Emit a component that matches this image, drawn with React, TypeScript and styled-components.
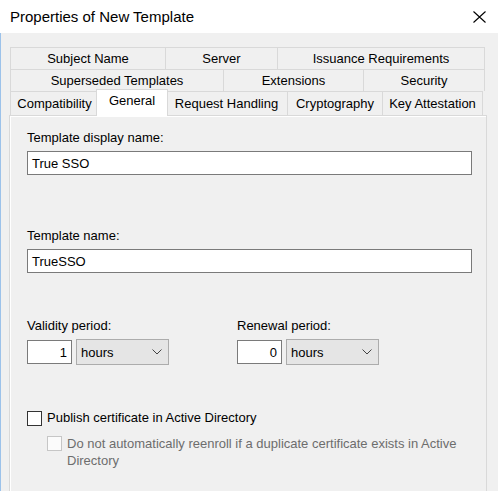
import styled, { createGlobalStyle } from "styled-components";

type TabInfo = { label: string; width: number; selected?: boolean };

const tabRows: { height: number; tabs: TabInfo[] }[] = [
  {
    height: 22,
    tabs: [
      { label: "Subject Name", width: 156 },
      { label: "Server", width: 113 },
      { label: "Issuance Requirements", width: 208 },
    ],
  },
  {
    height: 22,
    tabs: [
      { label: "Superseded Templates", width: 214 },
      { label: "Extensions", width: 141 },
      { label: "Security", width: 122 },
    ],
  },
  {
    height: 24,
    tabs: [
      { label: "Compatibility", width: 89 },
      { label: "General", width: 68, selected: true },
      { label: "Request Handling", width: 123 },
      { label: "Cryptography", width: 96 },
      { label: "Key Attestation", width: 101 },
    ],
  },
];

const CloseIcon = (): JSX.Element => (
  <svg width="13" height="12" viewBox="0 0 13 12">
    <path d="M0.5 0.5 L12.5 11.5 M12.5 0.5 L0.5 11.5" stroke="#000" strokeWidth="1.1" fill="none" />
  </svg>
);

const Chevron = (): JSX.Element => (
  <svg width="10" height="6" viewBox="0 0 10 6">
    <path d="M0.5 0.5 L5 5 L9.5 0.5" stroke="#444" strokeWidth="1" fill="none" />
  </svg>
);

const PeriodControl = ({ label, value }: { label: string; value: string }): JSX.Element => (
  <div>
    <Label>{label}</Label>
    <ControlRow>
      <NumberBox>{value}</NumberBox>
      <Dropdown>
        <span>hours</span>
        <Chevron />
      </Dropdown>
    </ControlRow>
  </div>
);

const App = (): JSX.Element => {
  return (
    <Window>
      <GlobalStyle />
      <TitleBar>
        <Title>Properties of New Template</Title>
        <CloseIcon />
      </TitleBar>
      <Body>
        <TabStrip>
          {tabRows.map((row, i) => (
            <TabRow key={i} $height={row.height}>
              {row.tabs.map((tab) => (
                <Tab key={tab.label} $width={tab.width} $selected={tab.selected}>
                  {tab.label}
                </Tab>
              ))}
            </TabRow>
          ))}
        </TabStrip>
        <Panel>
          <FieldGroup $top={0}>
            <Label>Template display name:</Label>
            <TextBox>True SSO</TextBox>
          </FieldGroup>
          <FieldGroup $top={53}>
            <Label>Template name:</Label>
            <TextBox>TrueSSO</TextBox>
          </FieldGroup>
          <PeriodGrid>
            <PeriodControl label="Validity period:" value="1" />
            <PeriodControl label="Renewal period:" value="0" />
          </PeriodGrid>
          <CheckRow>
            <CheckBox />
            <span>Publish certificate in Active Directory</span>
          </CheckRow>
          <SubCheckRow>
            <CheckBox $disabled />
            <DisabledText>
              Do not automatically reenroll if a duplicate certificate exists in Active Directory
            </DisabledText>
          </SubCheckRow>
        </Panel>
      </Body>
    </Window>
  );
};

const GlobalStyle = createGlobalStyle`
  html, body {
    margin: 0;
    padding: 0;
    background: #f0f0f0;
  }
  body {
    font-family: "Liberation Sans", Arial, sans-serif;
    font-size: 13px;
    color: #000;
  }
  * {
    box-sizing: border-box;
  }
`;

const Window = styled.div`
  width: 498px;
  height: 491px;
  display: flex;
  flex-direction: column;
  overflow: hidden;
  background: #f0f0f0;
`;
const TitleBar = styled.div`
  height: 33px;
  flex: none;
  background: #fff;
  display: flex;
  align-items: center;
  justify-content: space-between;
  padding: 0 12px 0 10px;
`;
const Title = styled.div`
  font-size: 15px;
  color: #000;
`;
const Body = styled.div`
  flex: 1;
  display: flex;
  flex-direction: column;
  border-left: 1px solid #9cc2ea;
  padding: 14px 0 0 9px;
`;
const TabStrip = styled.div`
  width: 475px;
  display: flex;
  flex-direction: column;
`;
const TabRow = styled.div<{ $height: number }>`
  display: flex;
  align-items: flex-end;
  height: ${(p) => p.$height}px;
`;
const Tab = styled.div<{ $width: number; $selected?: boolean }>`
  width: ${(p) => p.$width + (p.$selected ? 4 : 0)}px;
  height: ${(p) => (p.$selected ? "calc(100% + 3px)" : "100%")};
  margin: ${(p) => (p.$selected ? "-2px -3px -1px -2px" : "0 -1px 0 0")};
  padding-top: ${(p) => (p.$selected ? "2px" : "0")};
  position: ${(p) => (p.$selected ? "relative" : "static")};
  z-index: ${(p) => (p.$selected ? 1 : "auto")};
  background: ${(p) => (p.$selected ? "#fff" : "#f0f0f0")};
  border: 1px solid #d9d9d9;
  border-bottom: none;
  display: flex;
  align-items: ${(p) => (p.$selected ? "flex-start" : "center")};
  justify-content: center;
  line-height: ${(p) => (p.$selected ? "18px" : "16px")};
  white-space: nowrap;
`;
const Panel = styled.div`
  flex: 1;
  width: 478px;
  margin-left: -1px;
  border: 1px solid #d9d9d9;
  border-bottom: none;
  box-shadow: inset 1px 1px 0 #fff;
  padding: 14px 0 0 17px;
  display: flex;
  flex-direction: column;
`;
const FieldGroup = styled.div<{ $top: number }>`
  margin-top: ${(p) => p.$top}px;
`;
const Label = styled.div`
  line-height: 16px;
  margin-bottom: 5px;
`;
const TextBox = styled.div`
  width: 445px;
  height: 24px;
  background: #fff;
  border: 1px solid #7a7a7a;
  padding: 0 4px;
  display: flex;
  align-items: center;
`;
const PeriodGrid = styled.div`
  display: grid;
  grid-template-columns: 210px auto;
  margin-top: 45px;
`;
const ControlRow = styled.div`
  display: flex;
  align-items: center;
  gap: 4px;
  height: 26px;
`;
const NumberBox = styled.div`
  width: 45px;
  height: 24px;
  background: #fff;
  border: 1px solid #7a7a7a;
  display: flex;
  align-items: center;
  justify-content: flex-end;
  padding-right: 4px;
`;
const Dropdown = styled.div`
  width: 93px;
  height: 26px;
  background: #e5e5e5;
  border: 1px solid #acacac;
  display: flex;
  align-items: center;
  justify-content: space-between;
  padding: 0 6px 0 4px;
`;
const CheckRow = styled.div`
  display: flex;
  align-items: center;
  gap: 5px;
  margin-top: 45px;
  line-height: 16px;
`;
const SubCheckRow = styled.div`
  display: flex;
  align-items: flex-start;
  gap: 5px;
  margin-top: 9px;
  padding-left: 20px;
`;
const CheckBox = styled.div<{ $disabled?: boolean }>`
  width: 15px;
  height: 15px;
  flex: none;
  background: ${(p) => (p.$disabled ? "#fbfbfb" : "#fff")};
  border: 1px solid ${(p) => (p.$disabled ? "#c6c6c6" : "#333")};
  margin-top: ${(p) => (p.$disabled ? "1px" : "0")};
`;
const DisabledText = styled.div`
  width: 405px;
  color: #6d6d6d;
  line-height: 17px;
`;

export default App;
